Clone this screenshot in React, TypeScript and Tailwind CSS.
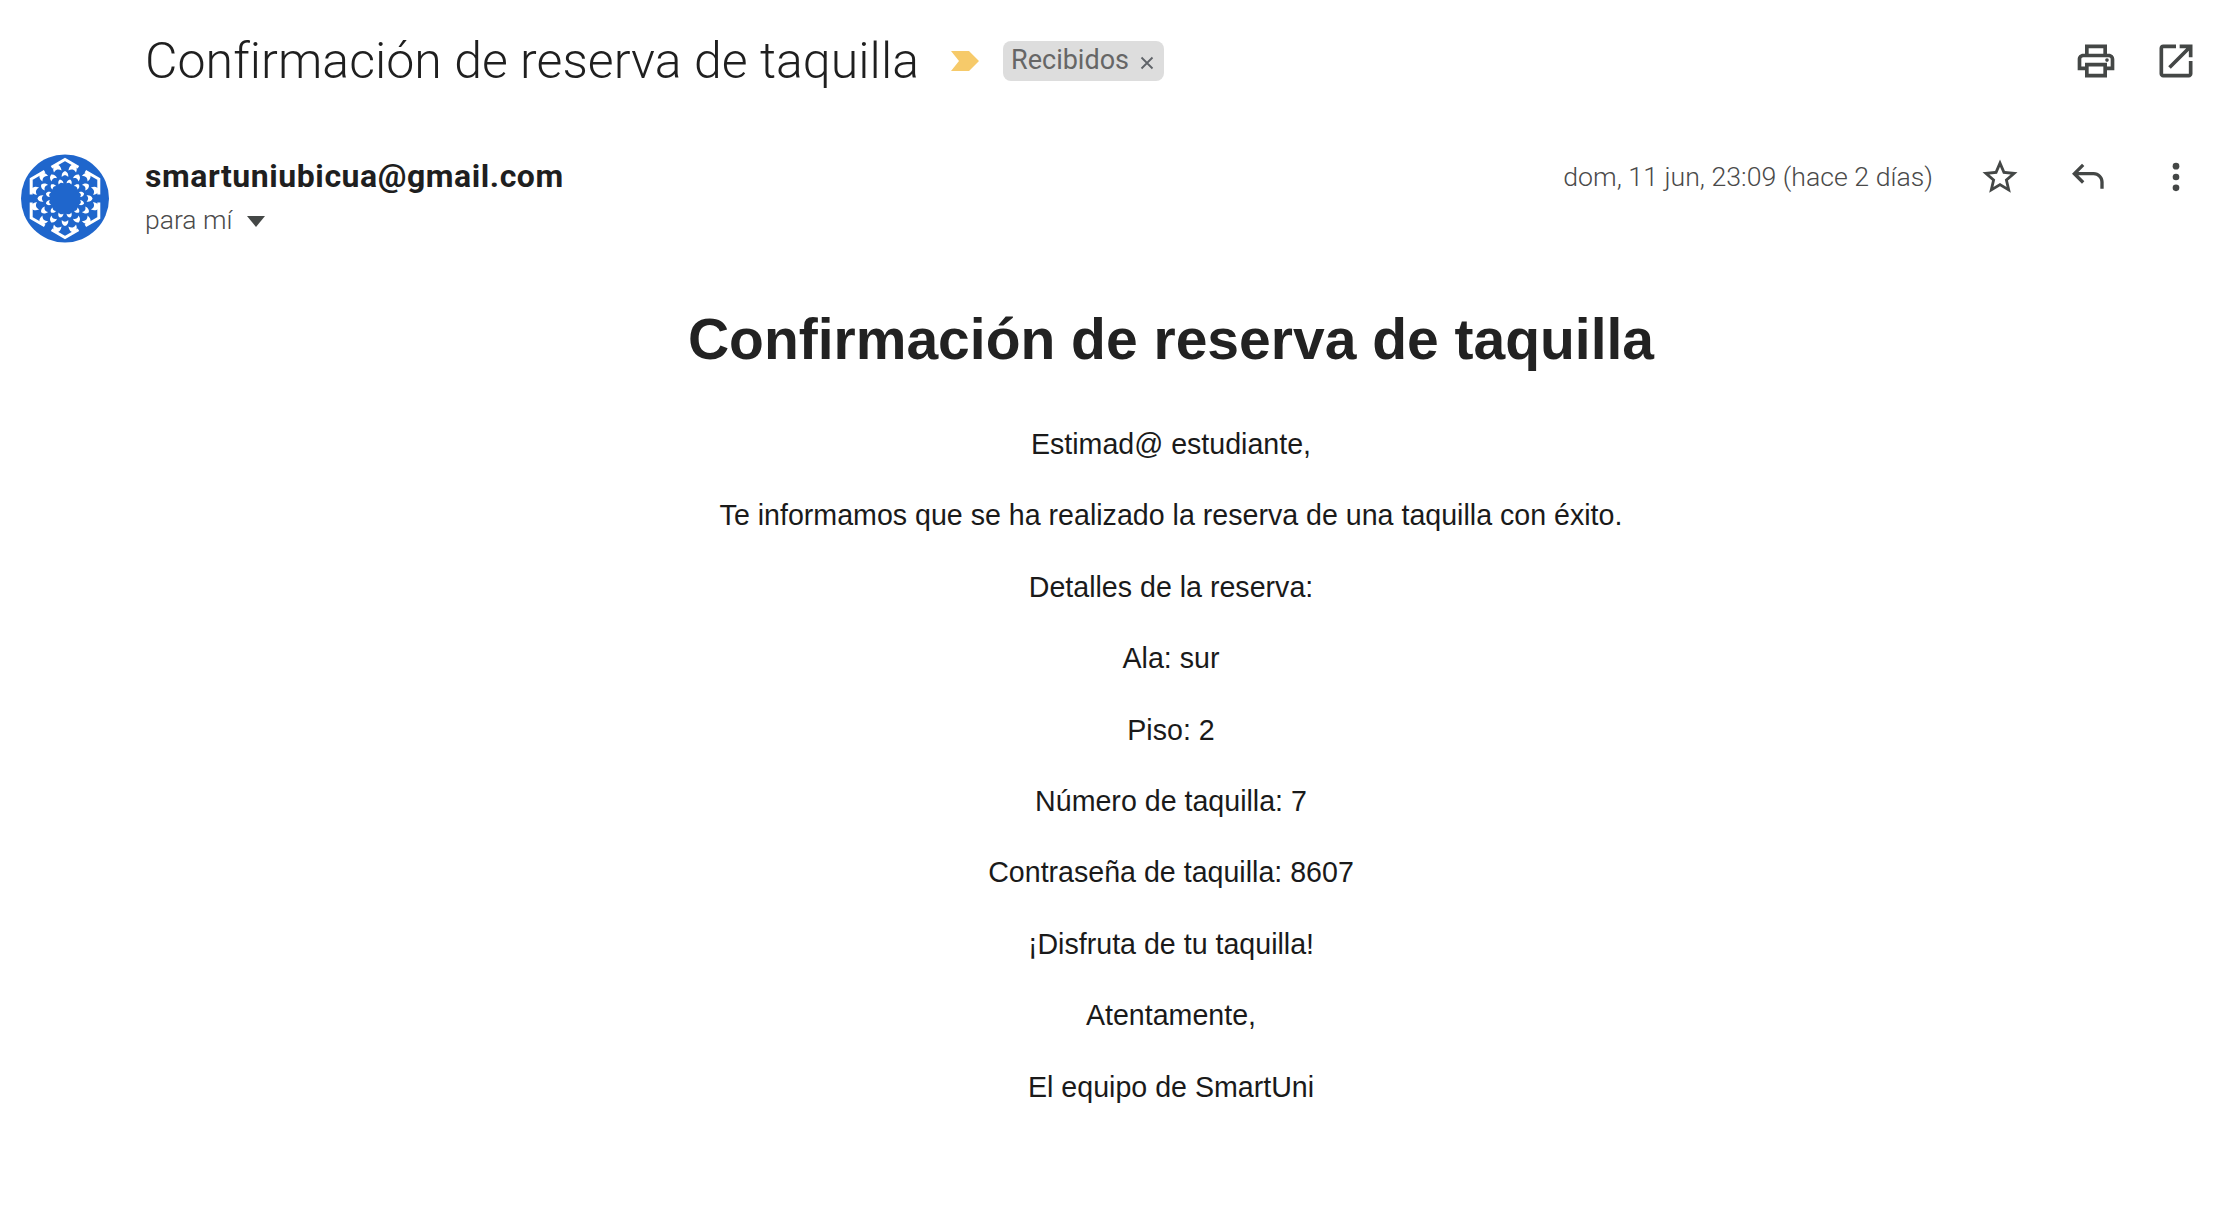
import React from 'react';

const bodyLines = [
  'Estimad@ estudiante,',
  'Te informamos que se ha realizado la reserva de una taquilla con éxito.',
  'Detalles de la reserva:',
  'Ala: sur',
  'Piso: 2',
  'Número de taquilla: 7',
  'Contraseña de taquilla: 8607',
  '¡Disfruta de tu taquilla!',
  'Atentamente,',
  'El equipo de SmartUni',
];

function MaterialIcon({ d, size, children }: { d?: string; size: number; children?: React.ReactNode }) {
  return (
    <svg width={size} height={size} viewBox="0 0 24 24" fill="#444746">
      {d && <path d={d} />}
      {children}
    </svg>
  );
}

// mandala logo: three rings of petals inside a broken hexagon band
function Avatar() {
  const rings = [
    { r: 17, n: 12, s: 0.55, off: 15 },
    { r: 24, n: 12, s: 0.72, off: 0 },
    { r: 31, n: 12, s: 0.88, off: 15 },
  ];
  return (
    <svg width="88" height="89" viewBox="-44 -44 88 88" className="shrink-0">
      <circle r="44" fill="#1f66cc" />
      <path
        d="M0 -39 L33.8 -19.5 L33.8 19.5 L0 39 L-33.8 19.5 L-33.8 -19.5 Z"
        fill="none"
        stroke="#fff"
        strokeWidth="3"
        strokeDasharray="31 8"
        strokeDashoffset="15.5"
      />
      {rings.map((ring) =>
        Array.from({ length: ring.n }).map((_, i) => (
          <path
            key={`${ring.r}-${i}`}
            transform={`rotate(${(360 / ring.n) * i + ring.off}) translate(0 ${-ring.r}) scale(${ring.s})`}
            d="M0 -5 C3.5 -3.5 5 -1 4.5 3.5 C3 2 1.5 1.2 0 1.2 C-1.5 1.2 -3 2 -4.5 3.5 C-5 -1 -3.5 -3.5 0 -5 Z"
            fill="#fff"
          />
        ))
      )}
    </svg>
  );
}

export default function App() {
  return (
    <div className="min-h-screen bg-white pr-[22px] font-['Liberation_Sans',sans-serif] text-[#202124]">
      {/* Subject */}
      <div className="flex h-[121px] items-center pl-[145px]">
        <h1 className="font-['Roboto',sans-serif] text-[50px] font-light leading-none tracking-[0.05px] text-[#1f1f1f]">
          Confirmación de reserva de taquilla
        </h1>
        <svg width="28" height="20" viewBox="0 0 28 20" className="ml-[32px]">
          <path d="M0 0H18L28 10L18 20H0L8 10Z" fill="#f6ca6a" />
        </svg>
        <span className="ml-[24px] flex h-[40px] w-[161px] items-center rounded-[8px] bg-[#dddddd] pl-[8px] font-['Roboto',sans-serif] text-[27px] text-[#666666]">
          Recibidos
          <svg width="14" height="14" viewBox="0 0 14 14" className="ml-[11px] mt-[4px]">
            <path d="M1.5 1.5L12.5 12.5M12.5 1.5L1.5 12.5" stroke="#5f6368" strokeWidth="1.8" />
          </svg>
        </span>
        <div className="-mr-[1px] ml-auto flex items-center gap-[36px]">
          <MaterialIcon size={44} d="M19 8h-1V3H6v5H5c-1.66 0-3 1.34-3 3v6h4v4h12v-4h4v-6c0-1.66-1.34-3-3-3zM8 5h8v3H8V5zm8 12v2H8v-4h8v2zm2-2v-2H6v2H4v-4c0-.55.45-1 1-1h14c.55 0 1 .45 1 1v4h-2z">
            <circle cx="18" cy="11.5" r="1" />
          </MaterialIcon>
          <MaterialIcon size={44} d="M19 19H5V5h7V3H5c-1.11 0-2 .9-2 2v14c0 1.1.89 2 2 2h14c1.1 0 2-.9 2-2v-7h-2v7zM14 3v2h3.59l-9.83 9.83 1.41 1.41L19 6.41V10h2V3h-7z" />
        </div>
      </div>

      {/* Sender row */}
      <div className="mt-[33px] flex pl-[21px]">
        <Avatar />
        <div className="ml-[36px] pt-[2px]">
          <div className="font-['Roboto',sans-serif] text-[32px] font-bold leading-[40px] tracking-[0.55px] text-[#1f1f1f]">
            smartuniubicua@gmail.com
          </div>
          <div className="mt-[5px] flex items-center font-['Roboto',sans-serif] text-[26.5px] font-light leading-[38px] text-[#4a4a4a]">
            para mí
            <svg width="18" height="11" viewBox="0 0 18 11" className="ml-[15px] mt-[2px]">
              <path d="M0 0H18L9 11Z" fill="#444746" />
            </svg>
          </div>
        </div>
        <div className="ml-auto flex h-[46px] items-center">
          <span className="font-['Roboto',sans-serif] text-[26.7px] font-light text-[#4a4a4a]">dom, 11 jun, 23:09 (hace 2 días)</span>
          <div className="ml-[46px]">
            <MaterialIcon size={42} d="M22 9.24l-7.19-.62L12 2 9.19 8.63 2 9.24l5.46 4.73L5.82 21 12 17.27 18.18 21l-1.63-7.03L22 9.24zM12 15.4l-3.76 2.27 1-4.28-3.32-2.88 4.38-.38L12 6.1l1.71 4.04 4.38.38-3.32 2.88 1 4.28L12 15.4z" />
          </div>
          <div className="ml-[46px]">
            <MaterialIcon size={40} d="M20 19v-4c0-2.2-1.8-4-4-4H6.8l3.6 3.6L9 16l-6-6 6-6 1.4 1.4L6.8 9H16c3.3 0 6 2.7 6 6v4h-2z" />
          </div>
          <div className="ml-[49px] mr-[1px]">
            <MaterialIcon size={40}>
              <circle cx="12" cy="5.5" r="2" />
              <circle cx="12" cy="12" r="2" />
              <circle cx="12" cy="18.5" r="2" />
            </MaterialIcon>
          </div>
        </div>
      </div>

      {/* Message body */}
      <div className="pl-[145px] pt-[64px] text-center">
        <h2 className="text-[57px] font-bold leading-[64px] text-[#222222]">Confirmación de reserva de taquilla</h2>
        <div className="mt-[55px] flex flex-col text-[28.6px] text-[#1a1a1a]">
          {bodyLines.map((line) => (
            <p key={line} className="h-[71.4px] leading-[36px]">
              {line}
            </p>
          ))}
        </div>
      </div>
    </div>
  );
}
